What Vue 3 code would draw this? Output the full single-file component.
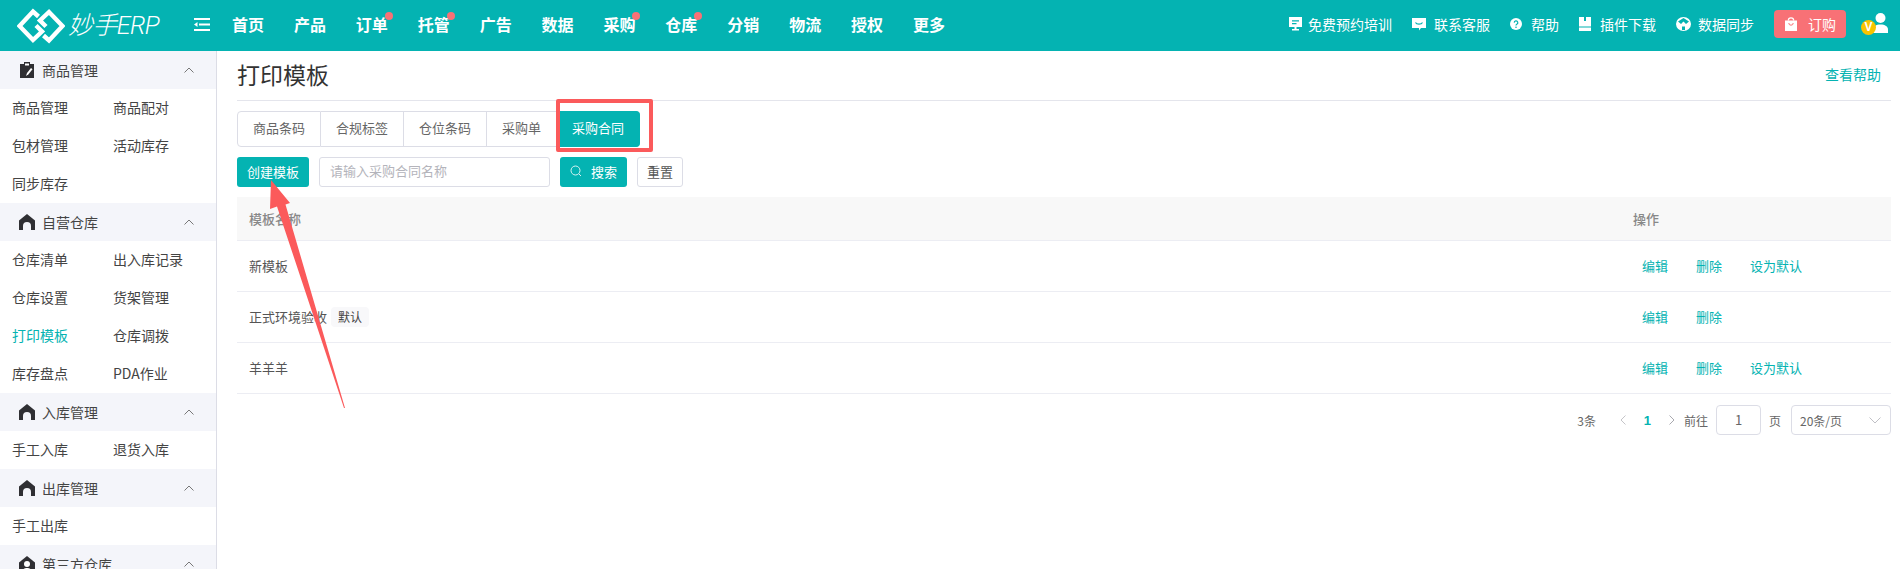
<script setup>
const navItems = [
  { t: '首页' }, { t: '产品' }, { t: '订单', dot: true }, { t: '托管', dot: true }, { t: '广告' }, { t: '数据' },
  { t: '采购', dot: true }, { t: '仓库', dot: true }, { t: '分销' }, { t: '物流' }, { t: '授权' }, { t: '更多' },
]
const sections = [
  { title: '商品管理', icon: 'clip', items: ['商品管理', '商品配对', '包材管理', '活动库存', '同步库存'] },
  { title: '自营仓库', icon: 'house', items: ['仓库清单', '出入库记录', '仓库设置', '货架管理', '打印模板', '仓库调拨', '库存盘点', 'PDA作业'] },
  { title: '入库管理', icon: 'house', items: ['手工入库', '退货入库'] },
  { title: '出库管理', icon: 'house', items: ['手工出库'] },
  { title: '第三方仓库', icon: 'person', items: [] },
]
const tabs = ['商品条码', '合规标签', '仓位条码', '采购单', '采购合同']
const rows = [
  { name: '新模板', setDefault: true },
  { name: '正式环境验收', tag: '默认', setDefault: false },
  { name: '羊羊羊', setDefault: true },
]
</script>

<template>
  <div class="app">
    <header class="topbar">
      <div class="logo">
        <svg class="logo-mark" viewBox="0 0 48 36" width="48" height="36">
          <g fill="none" stroke="#fff" stroke-width="4.4">
            <path d="M21.500 8.500 L16 3.500 L2.500 18 L16 32 L25 23.500 L19 17.500" />
            <path d="M26.500 27.500 L32 32.500 L45.500 18 L32 4 L23 12.500 L29 18.500" />
          </g>
        </svg>
        <span class="logo-text">妙手ERP</span>
      </div>
      <svg class="fold" viewBox="0 0 16 13" width="16" height="13">
        <path d="M0 1h16M5 6.500h11M0 12h16" stroke="#fff" stroke-width="2" fill="none" />
        <path d="M0 6.500 L3.500 4 V9Z" fill="#fff" />
      </svg>
      <nav class="nav">
        <span v-for="n in navItems" :key="n.t" class="nav-item">{{ n.t }}<i v-if="n.dot" class="dot"></i></span>
      </nav>
      <div class="tools">
        <span class="tool t1">
          <svg viewBox="0 0 13 14" width="13" height="14"><path fill="#fff" d="M0 0h13v10H7.500v2H10v1.500H3V12h2.500v-2H0z"/><path fill="#04b3b2" d="M3 3.200h7v1.200H3zM3 6h4.500v1.200H3z"/></svg>
          <span class="tool-text">免费预约培训</span>
        </span>
        <span class="tool t2">
          <svg viewBox="0 0 14 14" width="14" height="14"><path fill="#fff" d="M0 1h14v10H9l-2 2.500V11H0z"/><path fill="none" stroke="#04b3b2" stroke-width="1.100" d="M3.500 5.500c1 2.200 6 2.200 7 0"/></svg>
          <span class="tool-text">联系客服</span>
        </span>
        <span class="tool t3">
          <svg viewBox="0 0 12 12" width="12" height="12"><circle cx="6" cy="6" r="6" fill="#fff"/><path d="M4.200 4.600a1.800 1.800 0 1 1 2.600 1.700c-.6.300-.8.600-.8 1.200" fill="none" stroke="#04b3b2" stroke-width="1.200"/><circle cx="6" cy="9.300" r=".8" fill="#04b3b2"/></svg>
          <span class="tool-text">帮助</span>
        </span>
        <span class="tool t4">
          <svg viewBox="0 0 12 14" width="12" height="14"><path fill="#fff" d="M0 0h12v14H0z"/><path fill="#04b3b2" d="M5 0h2v4H5zM0 9.500h12v.9H0z"/></svg>
          <span class="tool-text">插件下载</span>
        </span>
        <span class="tool t5">
          <svg viewBox="0 0 15 14" width="15" height="14"><ellipse cx="7.500" cy="7" rx="7.500" ry="7" fill="#fff"/><path fill="#04b3b2" d="M7.500 1v3.500L5 7 2 4.500zM7.500 1v3.500L10 7l3-2.500zM6 9.500h3V13H6z"/><circle cx="7.500" cy="7" r="1.500" fill="#fff"/></svg>
          <span class="tool-text">数据同步</span>
        </span>
        <button class="buy">
          <svg viewBox="0 0 12 14" width="12" height="14"><path fill="#fff" d="M0 3.500h12V14H0z"/><path d="M3.300 3.500a2.700 2.700 0 0 1 5.400 0" fill="none" stroke="#fff" stroke-width="1.300"/><path d="M3.800 6a2.200 2.200 0 0 0 4.400 0" fill="none" stroke="#f87176" stroke-width="1"/></svg>
          <span>订购</span>
        </button>
        <span class="user">
          <svg class="user-svg" viewBox="0 0 15 20" width="15" height="20"><circle cx="7.500" cy="5" r="5" fill="#fff"/><path fill="#fff" d="M0 20v-3.500c0-3 3-5 7.500-5s7.500 2 7.500 5V20z"/></svg>
          <b class="vip">V</b>
        </span>
      </div>
    </header>

    <div class="body">
      <aside class="sidebar">
        <section v-for="s in sections" :key="s.title">
          <div class="side-head">
            <svg v-if="s.icon === 'clip'" class="side-icon" viewBox="0 0 14 16" width="14" height="16">
              <path fill="#2f2f33" d="M0 2h4V0h6v2h4v14H0z"/><path fill="#fff" d="M5 1.500h4v2H5z"/><path fill="#fff" d="M6 14l1-3 4-5 1.500 1.200-4 5z"/>
            </svg>
            <svg v-else-if="s.icon === 'house'" class="side-icon" viewBox="0 0 16 16" width="16" height="16">
              <path fill="#2f2f33" d="M8 0l8 6.500V16h-4v-4a4 4 0 0 0-8 0v4H0V6.500z"/>
            </svg>
            <svg v-else class="side-icon" viewBox="0 0 16 16" width="16" height="16">
              <path fill="#2f2f33" d="M8 0l8 6.500V16H0V6.500z"/><circle cx="8" cy="8" r="3" fill="#fff"/><path fill="#fff" d="M3.500 16c0-3 2-4 4.500-4s4.500 1 4.500 4z"/>
            </svg>
            <span class="side-title">{{ s.title }}</span>
            <svg class="caret" viewBox="0 0 10 6" width="10" height="6"><path d="M.5 5.500 5 1l4.500 4.500" fill="none" stroke="#777" stroke-width="1"/></svg>
          </div>
          <div v-if="s.items.length" class="side-items">
            <span v-for="i in s.items" :key="i" class="side-item" :class="{ on: i === '打印模板' }">{{ i }}</span>
          </div>
        </section>
      </aside>

      <main class="main">
        <div class="title-row">
          <h1 class="title">打印模板</h1>
          <a class="help">查看帮助</a>
        </div>

        <div class="tabs">
          <span v-for="t in tabs" :key="t" class="tab" :class="{ active: t === '采购合同' }">{{ t }}</span>
        </div>

        <div class="filters">
          <button class="btn primary">创建模板</button>
          <div class="input">请输入采购合同名称</div>
          <button class="btn primary search">
            <svg viewBox="0 0 12 12" width="12" height="12"><circle cx="5.500" cy="5.500" r="4.500" fill="none" stroke="#d9f3f2" stroke-width="1"/><path d="M9 9l2 2" stroke="#d9f3f2" stroke-width="1"/></svg>
            <span>搜索</span>
          </button>
          <button class="btn plain">重置</button>
        </div>

        <div class="table">
          <div class="row head">
            <span class="c-name">模板名称</span>
            <span class="c-op-head">操作</span>
          </div>
          <div v-for="r in rows" :key="r.name" class="row">
            <span class="c-name">{{ r.name }}<em v-if="r.tag" class="tag">{{ r.tag }}</em></span>
            <span class="c-ops">
              <a>编辑</a><a>删除</a><a v-if="r.setDefault">设为默认</a>
            </span>
          </div>
        </div>

        <div class="pager">
          <span class="total">3条</span>
          <svg class="pg-arrow" viewBox="0 0 6 10" width="6" height="10"><path d="M5.500.5 1 5l4.500 4.500" fill="none" stroke="#c4c4c8"/></svg>
          <b class="pg-cur">1</b>
          <svg class="pg-arrow" viewBox="0 0 6 10" width="6" height="10"><path d="M.5.500 5 5 .5 9.500" fill="none" stroke="#a8a8ae"/></svg>
          <span class="goto">前往</span>
          <span class="pg-input">1</span>
          <span class="page-word">页</span>
          <span class="pg-select">20条/页
            <svg viewBox="0 0 12 7" width="12" height="7"><path d="M.5.500 6 6l5.500-5.500" fill="none" stroke="#c0c0c6"/></svg>
          </span>
        </div>
      </main>
    </div>

    <div class="mark-rect"></div>
    <svg class="mark-arrow" viewBox="0 0 1900 569" width="1900" height="569">
      <path fill="#fb5a5b" d="M271 180 L290 203 L285.500 204.500 L345 408 L344 408 L277 206.500 L270 209 Z" />
    </svg>
  </div>
</template>

<style>
html, body { margin: 0; background: #fff; }
</style>

<style scoped>
.app {
  position: relative;
  width: 1900px;
  height: 569px;
  overflow: hidden;
  font-family: "Noto Sans CJK SC", "Liberation Sans", sans-serif;
  font-size: 13px;
  color: #555;
  background: #fff;
}
.topbar {
  height: 51px;
  background: #04b3b2;
  display: flex;
  align-items: center;
  color: #fff;
  padding-left: 17px;
}
.logo { display: flex; align-items: center; width: 177px; }
.logo-mark { flex: none; }
.logo-text {
  margin-left: 3px;
  font-size: 25px;
  line-height: 36px;
  font-style: italic;
  font-weight: 300;
  letter-spacing: -0.6px;
  font-family: Roboto, "Noto Sans CJK SC", sans-serif;
}
.fold { flex: none; margin-bottom: 2px; margin-right: 22px; }
.nav { display: flex; gap: 29.900px; margin-bottom: 4px; }
.nav-item { position: relative; font-size: 16px; font-weight: 700; line-height: 24px; }
.dot {
  position: absolute;
  right: -5px;
  top: 0;
  width: 8px;
  height: 8px;
  border-radius: 50%;
  background: #f87176;
}
.tools { margin-left: auto; display: flex; align-items: center; padding-right: 12px; margin-bottom: 3px; }
.tool { display: flex; align-items: center; font-size: 14px; margin-right: 20px; }
.tool svg { flex: none; }
.t1 { gap: 6px; }
.t2 { gap: 8px; }
.t3, .t4 { gap: 9px; }
.t5 { gap: 7px; }
.tool-text { line-height: 20px; white-space: nowrap; }
.buy {
  display: flex;
  align-items: center;
  gap: 11px;
  width: 72px;
  height: 28px;
  padding: 0 0 0 11px;
  border: 0;
  border-radius: 4px;
  background: #f87176;
  color: #fff;
  font: inherit;
  font-size: 14px;
  box-sizing: border-box;
}
.user { position: relative; width: 27px; height: 24px; margin-left: 15px; }
.user-svg { position: absolute; left: 12px; top: 1px; }
.vip {
  position: absolute;
  left: 0;
  top: 8px;
  width: 15px;
  height: 15px;
  border-radius: 50%;
  background: #f8c400;
  font: 700 12px/15px "Liberation Sans", sans-serif;
  text-align: center;
  color: #fff;
}

.body { display: flex; height: 518px; }
.sidebar {
  flex: none;
  width: 216px;
  border-right: 1px solid #dcdde6;
  overflow: hidden;
}
.side-head {
  box-sizing: border-box;
  height: 38px;
  background: #f4f5fa;
  display: flex;
  align-items: center;
  padding: 0 0 0 19px;
  color: #444;
  font-size: 14px;
}
.side-title { flex: 1; line-height: 20px; margin-bottom: 1px; }
.side-icon { flex: none; width: 16px; margin-right: 7px; }
.caret { flex: none; margin-right: 22px; }
.side-items { display: grid; grid-template-columns: 101px 1fr; padding-left: 12px; }
.side-item { height: 38px; line-height: 37px; font-size: 14px; color: #444; white-space: nowrap; }
.side-item.on { color: #04b3b2; }

.main { flex: 1; min-width: 0; padding: 0 9px 0 20px; }
.title-row {
  height: 50px;
  box-sizing: border-box;
  border-bottom: 1px solid #e4e5ec;
  display: flex;
  align-items: center;
  justify-content: space-between;
}
.title { margin: 0 0 3px; font-size: 23px; font-weight: 400; line-height: 32px; color: #333; }
.help { color: #04b3b2; font-size: 14px; margin: 0 10px 3px 0; }

.tabs {
  display: flex;
  margin-top: 10px;
  height: 36px;
}
.tab {
  box-sizing: border-box;
  height: 36px;
  line-height: 32px;
  padding: 0 15px;
  border: 1px solid #dcdde6;
  border-left: 0;
  color: #666;
  font-size: 13px;
}
.tab:first-child { border-left: 1px solid #dcdde6; border-radius: 4px 0 0 4px; }
.tab.active {
  background: #04b3b2;
  border-color: #04b3b2;
  color: #fff;
  border-radius: 0 4px 4px 0;
}
.filters { display: flex; margin-top: 10px; gap: 10px; }
.btn {
  height: 30px;
  border-radius: 3px;
  font: inherit;
  font-size: 13px;
  padding: 0 0 2px;
  box-sizing: border-box;
}
.btn.primary { background: #04b3b2; border: 0; color: #fff; width: 72px; }
.btn.search { width: 67px; display: flex; align-items: center; justify-content: center; gap: 9px; }
.btn.plain { background: #fff; border: 1px solid #dcdde6; color: #555; width: 46px; }
.input {
  box-sizing: border-box;
  width: 231px;
  height: 30px;
  line-height: 26px;
  padding-left: 10px;
  border: 1px solid #dcdde6;
  border-radius: 3px;
  color: #b4b4bb;
}
.table { margin-top: 10px; }
.row {
  position: relative;
  display: flex;
  align-items: center;
  height: 51px;
  box-sizing: border-box;
  border-bottom: 1px solid #ecedf3;
  padding: 0 0 1px 12px;
}
.row.head { height: 44px; background: #f8f8f8; color: #888; font-weight: 500; }
.c-name { display: flex; align-items: center; }
.c-op-head { position: absolute; left: 1396px; }
.c-ops { position: absolute; left: 1405px; display: flex; gap: 28px; color: #04b3b2; }
.tag {
  margin-left: 4px;
  padding: 0 7px;
  height: 20px;
  line-height: 20px;
  font-style: normal;
  background: #f8f8fa;
  border-radius: 4px;
  font-size: 12px;
  color: #444;
}
.pager { display: flex; align-items: center; margin-top: 11px; height: 30px; color: #666; font-size: 13px; justify-content: flex-end; }
.total { font-size: 12px; margin-right: 24px; }
.pg-arrow { flex: none; }
.pg-cur { color: #04b3b2; width: 43px; text-align: center; font-family: "Liberation Sans", sans-serif; font-size: 13px; }
.goto { margin-left: 9px; font-size: 12px; }
.pg-input {
  box-sizing: border-box;
  width: 45px;
  height: 30px;
  line-height: 28px;
  margin-left: 8px;
  text-align: center;
  border: 1px solid #dcdde6;
  border-radius: 4px;
}
.page-word { margin: 0 10px 0 8px; font-size: 12px; }
.pg-select {
  box-sizing: border-box;
  width: 100px;
  height: 30px;
  padding: 0 9px 0 8px;
  display: flex;
  align-items: center;
  justify-content: space-between;
  border: 1px solid #dcdde6;
  border-radius: 4px;
  font-size: 12px;
}
.mark-rect {
  position: absolute;
  left: 556px;
  top: 99px;
  width: 97px;
  height: 53px;
  box-sizing: border-box;
  border: 4px solid #fb5a5b;
  border-radius: 2px;
  pointer-events: none;
}
.mark-arrow { position: absolute; left: 0; top: 0; pointer-events: none; }
</style>
